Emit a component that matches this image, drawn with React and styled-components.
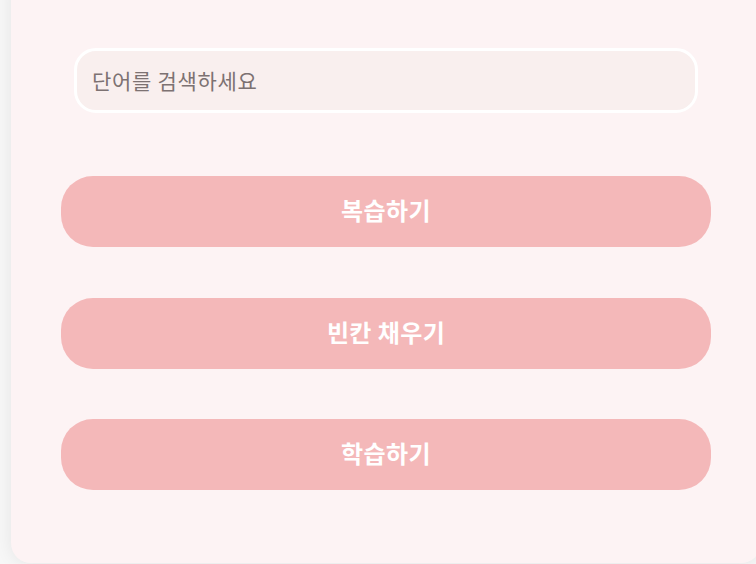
import styled, { createGlobalStyle } from "styled-components";

const GlobalStyle = createGlobalStyle`
  html, body {
    margin: 0;
    padding: 0;
    background: #fafafa;
    overflow: hidden;
  }
  body {
    font-family: "Noto Sans CJK KR", "Noto Sans", sans-serif;
  }
`;

const Page = styled.div`
  width: 756px;
  height: 564px;
  overflow: hidden;
  background: #f7f7f7;
`;

const Card = styled.div`
  box-sizing: border-box;
  width: 750px;
  margin-left: 11px;
  margin-top: -30px;
  padding: 78px 50px 73px;
  background: #fdf3f4;
  border-radius: 20px;
  box-shadow: 0 0 18px rgba(0, 0, 0, 0.08);
  display: flex;
  flex-direction: column;
`;

const SearchInput = styled.input`
  box-sizing: border-box;
  width: 624px;
  height: 65px;
  margin: 0 auto 63px;
  padding: 0 15px 2px;
  border: 3px solid #ffffff;
  border-radius: 22px;
  background: #f9efee;
  font-family: "Noto Sans CJK KR", sans-serif;
  font-size: 21px;
  letter-spacing: 0.7px;
  color: #5e5454;
  outline: none;

  &::placeholder {
    color: #7d7272;
  }
`;

const ButtonList = styled.div`
  display: flex;
  flex-direction: column;
  gap: 50.5px;
`;

const ActionButton = styled.button`
  box-sizing: border-box;
  width: 100%;
  height: 71px;
  padding: 0 0 4px;
  border: none;
  border-radius: 32px;
  background: #f4b8b9;
  color: #ffffff;
  font-family: "Noto Sans CJK KR", sans-serif;
  font-size: 24px;
  font-weight: 700;
  letter-spacing: 0.4px;
  cursor: pointer;
`;

const actions = ["복습하기", "빈칸 채우기", "학습하기"];

export default function App() {
  return (
    <>
      <GlobalStyle />
      <Page>
        <Card>
          <SearchInput placeholder="단어를 검색하세요" />
          <ButtonList>
            {actions.map((label) => (
              <ActionButton key={label}>{label}</ActionButton>
            ))}
          </ButtonList>
        </Card>
      </Page>
    </>
  );
}
